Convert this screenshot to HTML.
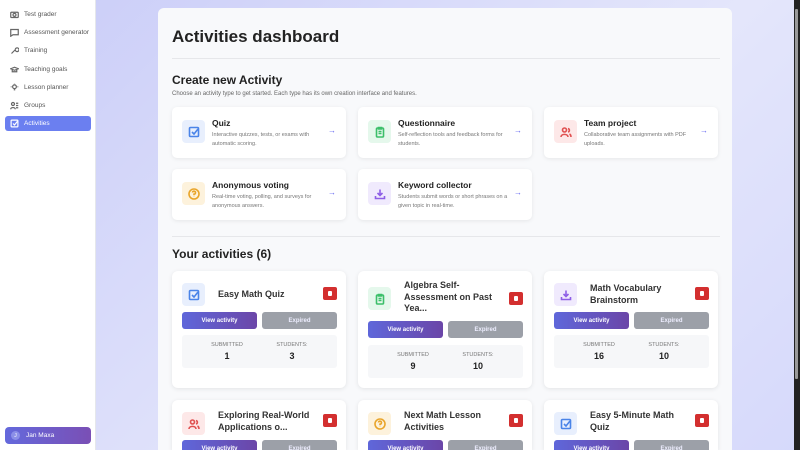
<!DOCTYPE html>
<html style="width:800px;height:450px;overflow:hidden"><head><style>
*{box-sizing:border-box;margin:0;padding:0}
html,body{width:800px;height:450px;overflow:hidden}
body{font-family:"Liberation Sans",sans-serif;background:linear-gradient(135deg,#c9ccf8,#e4e6fb 60%,#d6d9fb);position:relative;color:#222}
.side{position:absolute;left:0;top:0;width:96px;height:450px;background:#fff;border-right:1px solid #e5e7eb}
.nav{position:absolute;left:5px;width:86px;height:15px;font-size:6.5px;color:#555;display:flex;align-items:center;padding-left:5px;gap:5px}
.nav svg{width:9px;height:9px;fill:none;stroke:#666;stroke-width:1.6}
.nav.act{background:#6b7ff0;color:#fff;border-radius:3px}
.nav.act svg{stroke:#fff}
.user{position:absolute;left:5px;top:427px;width:86px;height:17px;border-radius:4px;background:linear-gradient(90deg,#6469dc,#7a4fb5);color:#fff;font-size:6.5px;display:flex;align-items:center;padding-left:6px;gap:6px}
.user i{width:9px;height:9px;border-radius:50%;background:#8b8fe8;font-style:normal;font-size:5px;display:flex;align-items:center;justify-content:center}
.main{position:absolute;left:158px;top:8px;width:574px;height:442px;background:#f8f9fb;border-radius:6px 6px 0 0;overflow:hidden}
h1{position:absolute;left:172px;top:27px;font-size:17px;font-weight:bold;color:#222}
.hr{position:absolute;left:172px;width:548px;height:1px;background:#e6e7ea}
h2{position:absolute;left:172px;font-size:12px;font-weight:bold;color:#222}
.sub{position:absolute;left:172px;top:91px;font-size:6px;color:#666}
.tc{position:absolute;width:174px;height:51px;background:#fff;border-radius:5px;box-shadow:0 1px 4px rgba(0,0,0,.08)}
.ic{position:absolute;width:23px;height:23px;border-radius:4px;display:flex;align-items:center;justify-content:center}
.ic svg{width:12px;height:12px;fill:none;stroke-width:1.6}
.tc .ic{left:10px;top:13px}
.tc b{position:absolute;left:40px;top:11px;font-size:8.5px}
.tc p{position:absolute;left:40px;top:24px;width:110px;font-size:5.5px;line-height:8.5px;color:#777}
.tc .ar{position:absolute;right:10px;top:19px;font-size:8px;color:#6366f1}
.ac{position:absolute;width:174px;height:117px;background:#fff;border-radius:6px;box-shadow:0 1px 5px rgba(0,0,0,.09)}
.ac .ic{left:10px;top:12px}
.ac .t{position:absolute;left:46px;width:100px;font-size:9px;font-weight:bold;line-height:11.5px;color:#333}
.del{position:absolute;right:9px;width:14px;height:13px;background:#d32f2f;border-radius:2px}
.del:after{content:"";position:absolute;left:5px;top:4px;width:4px;height:5px;background:#fff;border-radius:1px}
.btn{position:absolute;width:75px;height:17px;border-radius:3px;color:#fff;font-size:6px;font-weight:bold;display:flex;align-items:center;justify-content:center}
.vb{left:10px;background:linear-gradient(90deg,#5f67da,#6b46a8)}
.eb{left:90px;background:#9ca0a8;color:#eef}
.st{position:absolute;left:10px;width:155px;height:33px;background:#f6f7f9;border-radius:3px;font-size:5.5px;color:#777}
.st span{position:absolute;top:7px;width:70px;text-align:center}
.st em{position:absolute;top:16px;width:70px;text-align:center;font-style:normal;font-size:9px;font-weight:bold;color:#222}
.blue{background:#e8effd}.blue svg{stroke:#4a84e8}
.green{background:#e5f8ec}.green svg{stroke:#3cbf6a}
.red{background:#fde8e8}.red svg{stroke:#e05050}
.yel{background:#fdf2dc}.yel svg{stroke:#e9a52b}
.pur{background:#f0eafd}.pur svg{stroke:#8e5ee6}
.sb{position:absolute;right:0;top:0;width:6px;height:450px;background:#222}
.sb:after{content:"";position:absolute;left:1px;top:9px;width:3px;height:370px;background:#9a9a9a;border-radius:1px}
</style></head><body>
<div class="side">
<div class="nav" style="top:7px"><svg viewBox="0 0 12 12"><rect x="1" y="3" width="10" height="7" rx="1"/><circle cx="6" cy="6.5" r="2"/></svg>Test grader</div>
<div class="nav" style="top:25px"><svg viewBox="0 0 12 12"><path d="M1 2h10v7H4l-3 2z"/></svg>Assessment generator</div>
<div class="nav" style="top:43px"><svg viewBox="0 0 12 12"><path d="M2 10l5-5M7 5a2.5 2.5 0 1 0 0-.1"/></svg>Training</div>
<div class="nav" style="top:62px"><svg viewBox="0 0 12 12"><path d="M1 5l5-2 5 2-5 2zM3 6v3h6V6"/></svg>Teaching goals</div>
<div class="nav" style="top:80px"><svg viewBox="0 0 12 12"><circle cx="6" cy="5" r="2.5"/><path d="M5 9h2M6 1v.5M1 5h1M10 5h1"/></svg>Lesson planner</div>
<div class="nav" style="top:98px"><svg viewBox="0 0 12 12"><circle cx="4" cy="4" r="2"/><path d="M1 11c0-3 6-3 6 0M8 3h3M8 6h3M8 9h3"/></svg>Groups</div>
<div class="nav act" style="top:116px"><svg viewBox="0 0 12 12"><rect x="1.5" y="1.5" width="9" height="9" rx="1"/><path d="M4 6l2 2 4-5"/></svg>Activities</div>
<div class="user"><i>J</i>Jan Maxa</div>
</div>
<div class="main"></div>
<h1>Activities dashboard</h1>
<div class="hr" style="top:58px"></div>
<h2 style="top:73px">Create new Activity</h2>
<div class="sub">Choose an activity type to get started. Each type has its own creation interface and features.</div>

<div class="tc" style="left:172px;top:107px"><div class="ic blue"><svg viewBox="0 0 12 12"><rect x="1.5" y="1.5" width="9" height="9" rx="1"/><path d="M4 6l2 2 4-5"/></svg></div><b>Quiz</b><p>Interactive quizzes, tests, or exams with automatic scoring.</p><span class="ar">→</span></div>
<div class="tc" style="left:358px;top:107px"><div class="ic green"><svg viewBox="0 0 12 12"><rect x="2.5" y="2" width="7" height="9" rx="1"/><path d="M4.5 1.5h3v1.5h-3zM4.5 5.5h3M4.5 7.5h3"/></svg></div><b>Questionnaire</b><p>Self-reflection tools and feedback forms for students.</p><span class="ar">→</span></div>
<div class="tc" style="left:544px;top:107px"><div class="ic red"><svg viewBox="0 0 12 12"><circle cx="4.5" cy="4" r="2"/><path d="M1 11c0-3.5 7-3.5 7 0M8 2.5a1.8 1.8 0 0 1 0 3.5M9.5 8c1 .5 1.5 1.5 1.5 3"/></svg></div><b>Team project</b><p>Collaborative team assignments with PDF uploads.</p><span class="ar">→</span></div>
<div class="tc" style="left:172px;top:169px"><div class="ic yel"><svg viewBox="0 0 12 12"><circle cx="6" cy="6" r="5"/><path d="M4.5 4.5a1.5 1.5 0 1 1 1.5 1.7v1M6 8.7v.3"/></svg></div><b>Anonymous voting</b><p>Real-time voting, polling, and surveys for anonymous answers.</p><span class="ar">→</span></div>
<div class="tc" style="left:358px;top:169px"><div class="ic pur"><svg viewBox="0 0 12 12"><path d="M6 1.5v6M3.5 5l2.5 2.5L8.5 5M1.5 8v2.5h9V8"/></svg></div><b>Keyword collector</b><p>Students submit words or short phrases on a given topic in real-time.</p><span class="ar">→</span></div>

<div class="hr" style="top:236px"></div>
<h2 style="top:247px">Your activities (6)</h2>

<div class="ac" style="left:172px;top:271px"><div class="ic blue"><svg viewBox="0 0 12 12"><rect x="1.5" y="1.5" width="9" height="9" rx="1"/><path d="M4 6l2 2 4-5"/></svg></div><div class="t" style="top:18px">Easy Math Quiz</div><div class="del" style="top:16px"></div><div class="btn vb" style="top:41px">View activity</div><div class="btn eb" style="top:41px">Expired</div><div class="st" style="top:64px"><span style="left:10px">SUBMITTED</span><span style="left:75px">STUDENTS:</span><em style="left:10px">1</em><em style="left:75px">3</em></div></div>
<div class="ac" style="left:358px;top:271px"><div class="ic green" style="top:16px"><svg viewBox="0 0 12 12"><rect x="2.5" y="2" width="7" height="9" rx="1"/><path d="M4.5 1.5h3v1.5h-3zM4.5 5.5h3M4.5 7.5h3"/></svg></div><div class="t" style="top:9px">Algebra Self-Assessment on Past Yea...</div><div class="del" style="top:21px"></div><div class="btn vb" style="top:50px">View activity</div><div class="btn eb" style="top:50px">Expired</div><div class="st" style="top:74px"><span style="left:10px">SUBMITTED</span><span style="left:75px">STUDENTS:</span><em style="left:10px">9</em><em style="left:75px">10</em></div></div>
<div class="ac" style="left:544px;top:271px"><div class="ic pur"><svg viewBox="0 0 12 12"><path d="M6 1.5v6M3.5 5l2.5 2.5L8.5 5M1.5 8v2.5h9V8"/></svg></div><div class="t" style="top:12px">Math Vocabulary Brainstorm</div><div class="del" style="top:16px"></div><div class="btn vb" style="top:41px">View activity</div><div class="btn eb" style="top:41px">Expired</div><div class="st" style="top:64px"><span style="left:10px">SUBMITTED</span><span style="left:75px">STUDENTS:</span><em style="left:10px">16</em><em style="left:75px">10</em></div></div>

<div class="ac" style="left:172px;top:400px;height:50px;border-radius:6px 6px 0 0"><div class="ic red"><svg viewBox="0 0 12 12"><circle cx="4.5" cy="4" r="2"/><path d="M1 11c0-3.5 7-3.5 7 0M8 2.5a1.8 1.8 0 0 1 0 3.5M9.5 8c1 .5 1.5 1.5 1.5 3"/></svg></div><div class="t" style="top:10px;width:110px">Exploring Real-World Applications o...</div><div class="del" style="top:14px"></div><div class="btn vb" style="top:40px">View activity</div><div class="btn eb" style="top:40px">Expired</div></div>
<div class="ac" style="left:358px;top:400px;height:50px;border-radius:6px 6px 0 0"><div class="ic yel"><svg viewBox="0 0 12 12"><circle cx="6" cy="6" r="5"/><path d="M4.5 4.5a1.5 1.5 0 1 1 1.5 1.7v1M6 8.7v.3"/></svg></div><div class="t" style="top:10px">Next Math Lesson Activities</div><div class="del" style="top:14px"></div><div class="btn vb" style="top:40px">View activity</div><div class="btn eb" style="top:40px">Expired</div></div>
<div class="ac" style="left:544px;top:400px;height:50px;border-radius:6px 6px 0 0"><div class="ic blue"><svg viewBox="0 0 12 12"><rect x="1.5" y="1.5" width="9" height="9" rx="1"/><path d="M4 6l2 2 4-5"/></svg></div><div class="t" style="top:10px">Easy 5-Minute Math Quiz</div><div class="del" style="top:14px"></div><div class="btn vb" style="top:40px">View activity</div><div class="btn eb" style="top:40px">Expired</div></div>
<div class="sb"></div>
</body></html>
